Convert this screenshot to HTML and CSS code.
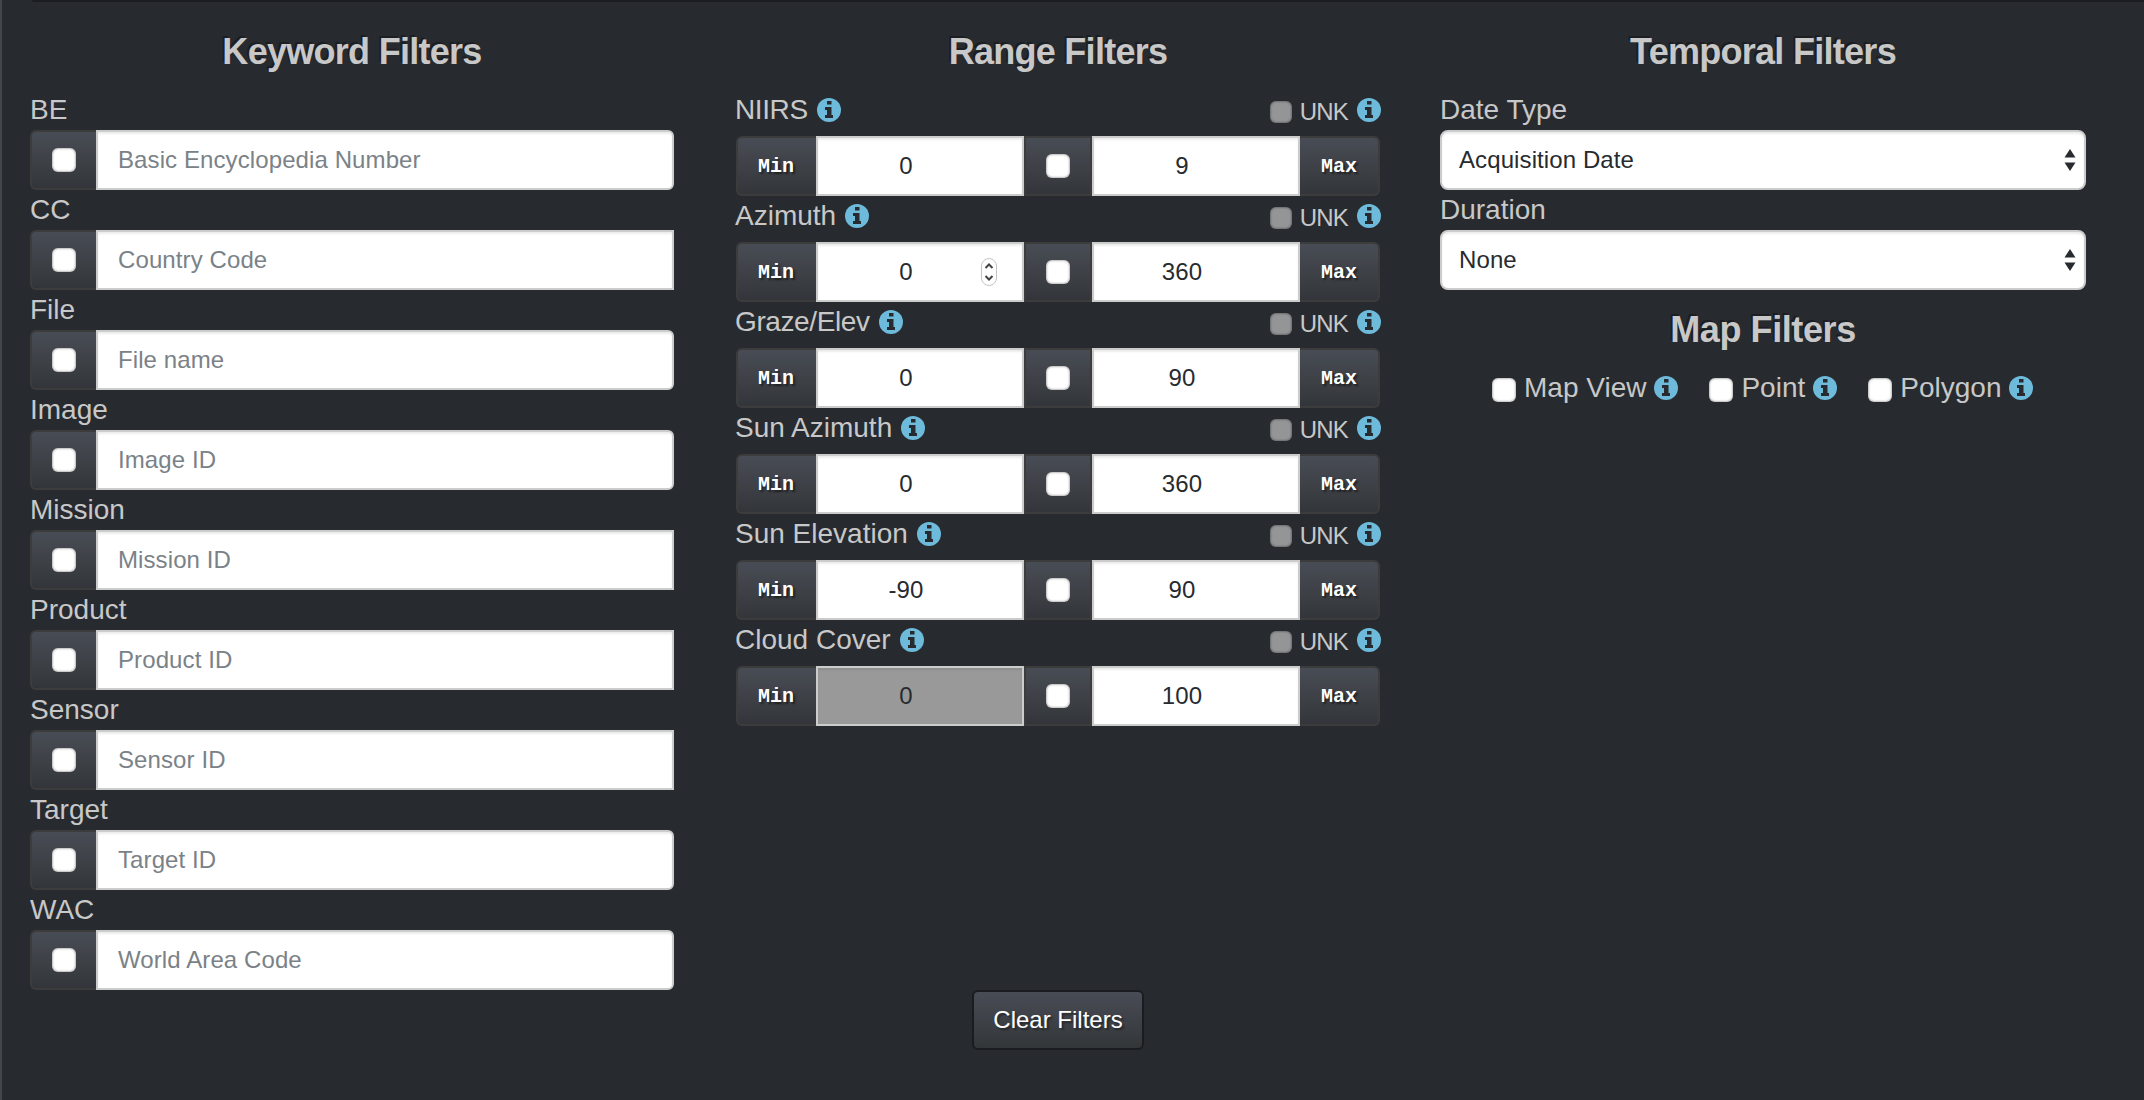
FILE: index.html
```html
<!DOCTYPE html>
<html lang="en">
<head>
<meta charset="utf-8">
<title>Filters</title>
<link rel="stylesheet" href="styles.css">
</head>
<body>
<svg class="defs" width="0" height="0">
  <symbol id="info" viewBox="0 0 24 24">
    <circle cx="12" cy="12" r="12"/>
    <path class="glyph" d="M10 3h4.5v3.6H10zM8 9h6.5v8H16v3H8v-3h2v-5H8z"/>
  </symbol>
  <symbol id="sort" viewBox="0 0 12 22">
    <path d="M6 0l5.5 8.5H.5zM6 22L.5 13.5h11z"/>
  </symbol>
</svg>
<main class="panel">
  <section class="column">
    <h4>Keyword Filters</h4>
    <label class="name">BE</label>
    <div class="group"><div class="addon"><input type="checkbox"></div><input class="field rounded" placeholder="Basic Encyclopedia Number"></div>
    <label class="name">CC</label>
    <div class="group"><div class="addon"><input type="checkbox"></div><input class="field" placeholder="Country Code"></div>
    <label class="name">File</label>
    <div class="group"><div class="addon"><input type="checkbox"></div><input class="field rounded" placeholder="File name"></div>
    <label class="name">Image</label>
    <div class="group"><div class="addon"><input type="checkbox"></div><input class="field rounded" placeholder="Image ID"></div>
    <label class="name">Mission</label>
    <div class="group"><div class="addon"><input type="checkbox"></div><input class="field" placeholder="Mission ID"></div>
    <label class="name">Product</label>
    <div class="group"><div class="addon"><input type="checkbox"></div><input class="field" placeholder="Product ID"></div>
    <label class="name">Sensor</label>
    <div class="group"><div class="addon"><input type="checkbox"></div><input class="field" placeholder="Sensor ID"></div>
    <label class="name">Target</label>
    <div class="group"><div class="addon"><input type="checkbox"></div><input class="field rounded" placeholder="Target ID"></div>
    <label class="name">WAC</label>
    <div class="group"><div class="addon"><input type="checkbox"></div><input class="field rounded" placeholder="World Area Code"></div>
  </section>
  <section class="column">
    <h4>Range Filters</h4>
    <div class="range-head">
      <label class="name tight">NIIRS<svg class="info"><use href="#info"/></svg></label>
      <label class="unknown"><input type="checkbox">UNK<svg class="info"><use href="#info"/></svg></label>
    </div>
    <div class="group">
      <div class="addon min">Min</div>
      <div class="number-box"><input class="field number" value="0"></div>
      <div class="addon middle"><input type="checkbox"></div>
      <div class="number-box"><input class="field number" value="9"></div>
      <div class="addon max">Max</div>
    </div>
    <div class="range-head">
      <label class="name">Azimuth<svg class="info"><use href="#info"/></svg></label>
      <label class="unknown"><input type="checkbox">UNK<svg class="info"><use href="#info"/></svg></label>
    </div>
    <div class="group">
      <div class="addon min">Min</div>
      <div class="number-box">
        <input class="field number" value="0">
        <svg class="spinner" viewBox="0 0 20 32">
          <rect x="2.5" y="2.5" width="15" height="27" rx="7.5" fill="#fff" stroke="#c4c4c4"/>
          <path d="M6.5 12l3.5-3.5 3.5 3.5M6.5 20l3.5 3.5 3.5-3.5" fill="none" stroke="#444" stroke-width="2"/>
        </svg>
      </div>
      <div class="addon middle"><input type="checkbox"></div>
      <div class="number-box"><input class="field number" value="360"></div>
      <div class="addon max">Max</div>
    </div>
    <div class="range-head">
      <label class="name tight">Graze/Elev<svg class="info"><use href="#info"/></svg></label>
      <label class="unknown"><input type="checkbox">UNK<svg class="info"><use href="#info"/></svg></label>
    </div>
    <div class="group">
      <div class="addon min">Min</div>
      <div class="number-box"><input class="field number" value="0"></div>
      <div class="addon middle"><input type="checkbox"></div>
      <div class="number-box"><input class="field number" value="90"></div>
      <div class="addon max">Max</div>
    </div>
    <div class="range-head">
      <label class="name">Sun Azimuth<svg class="info"><use href="#info"/></svg></label>
      <label class="unknown"><input type="checkbox">UNK<svg class="info"><use href="#info"/></svg></label>
    </div>
    <div class="group">
      <div class="addon min">Min</div>
      <div class="number-box"><input class="field number" value="0"></div>
      <div class="addon middle"><input type="checkbox"></div>
      <div class="number-box"><input class="field number" value="360"></div>
      <div class="addon max">Max</div>
    </div>
    <div class="range-head">
      <label class="name">Sun Elevation<svg class="info"><use href="#info"/></svg></label>
      <label class="unknown"><input type="checkbox">UNK<svg class="info"><use href="#info"/></svg></label>
    </div>
    <div class="group">
      <div class="addon min">Min</div>
      <div class="number-box"><input class="field number" value="-90"></div>
      <div class="addon middle"><input type="checkbox"></div>
      <div class="number-box"><input class="field number" value="90"></div>
      <div class="addon max">Max</div>
    </div>
    <div class="range-head">
      <label class="name">Cloud Cover<svg class="info"><use href="#info"/></svg></label>
      <label class="unknown"><input type="checkbox">UNK<svg class="info"><use href="#info"/></svg></label>
    </div>
    <div class="group">
      <div class="addon min">Min</div>
      <div class="number-box"><input class="field number" value="0" disabled></div>
      <div class="addon middle"><input type="checkbox"></div>
      <div class="number-box"><input class="field number" value="100"></div>
      <div class="addon max">Max</div>
    </div>
  </section>
  <section class="column">
    <h4>Temporal Filters</h4>
    <label class="name">Date Type</label>
    <div class="select"><span>Acquisition Date</span><svg><use href="#sort"/></svg></div>
    <label class="name">Duration</label>
    <div class="select"><span>None</span><svg><use href="#sort"/></svg></div>
    <h4 class="map-title">Map Filters</h4>
    <div class="map-options">
      <label class="option"><input type="checkbox"><span>Map View</span><svg class="info"><use href="#info"/></svg></label>
      <label class="option"><input type="checkbox"><span>Point</span><svg class="info"><use href="#info"/></svg></label>
      <label class="option"><input type="checkbox"><span>Polygon</span><svg class="info"><use href="#info"/></svg></label>
    </div>
  </section>
</main>
<footer><button class="clear" type="button">Clear Filters</button></footer>
</body>
</html>
```
FILE: styles.css
```css
* { box-sizing: border-box; }
body {
  margin: 0;
  height: 1100px;
  overflow: hidden;
  background: #272b30;
  color: #c8c8c8;
  font-family: "Liberation Sans", Arial, sans-serif;
  border-left: 2px solid #43474b;
}
body::before {
  content: "";
  display: block;
  height: 2px;
  margin-left: 30px;
  background: #1b1d20;
  border-bottom-left-radius: 2px;
}
.defs { display: block; position: absolute; }
.panel {
  display: grid;
  grid-template-columns: 644px 644px 646px;
  column-gap: 61px;
  padding: 28px 0 0 28px;
  height: 988px;
}
h4 {
  margin: 0 0 16px;
  height: 44px;
  line-height: 43px;
  font-size: 36px;
  font-weight: bold;
  letter-spacing: -.72px;
  text-align: center;
  text-shadow: -2px -2px 0 rgba(0, 0, 0, .3);
}
.name {
  display: block;
  height: 40px;
  line-height: 40px;
  font-size: 28px;
}
.group { display: flex; height: 60px; }
.addon {
  display: flex;
  align-items: center;
  justify-content: center;
  flex: none;
  width: 66px;
  border: 2px solid #3d3c3c;
  border-right-width: 0;
  border-radius: 6px 0 0 6px;
  background: linear-gradient(#484c55, #3c3f44 60%, #323539);
  color: #fff;
  font: bold 20px "Liberation Mono", "Courier New", monospace;
  text-shadow: 2px 2px 2px rgba(0, 0, 0, .5);
}
.addon.middle { width: 68px; border-right-width: 2px; border-radius: 0; }
.addon.min, .addon.max { width: 80px; padding-right: 2px; }
.addon.max { border-width: 2px 2px 2px 0; border-radius: 0 6px 6px 0; padding-right: 0; }
.field {
  flex: 1;
  min-width: 0;
  margin: 0;
  padding: 0 20px;
  border: 2px solid #ccc;
  border-radius: 0;
  background: #fff;
  box-shadow: inset 0 2px 2px rgba(0, 0, 0, .075);
  color: #272b30;
  font: 24px "Liberation Sans", Arial, sans-serif;
  letter-spacing: .1px;
}
.field.rounded { border-radius: 0 6px 6px 0; }
.field::placeholder { color: #7a8288; opacity: 1; }
.field.number { width: 100%; height: 60px; padding: 0 44px 0 16px; text-align: center; }
.field:disabled { background: #999; }
.number-box { position: relative; flex: 1; }
.spinner { position: absolute; left: 163px; top: 14px; width: 20px; height: 32px; }
input[type="checkbox"] {
  appearance: none;
  flex: none;
  width: 24px;
  height: 24px;
  margin: 0;
  border-radius: 6px;
  background: #fff;
  box-shadow: inset 0 0 2px 1px rgba(0, 0, 0, .28);
}
.info { flex: none; display: block; width: 24px; height: 24px; fill: #6dbadb; }
.glyph { fill: #272b30; }
.column:nth-child(2) { margin: 0 -1px 0 1px; }
.range-head { display: flex; justify-content: space-between; height: 46px; margin: 0 -1px; }
.range-head .name { display: flex; }
.range-head .name .info { margin: 8px 0 0 9px; }
.range-head .name.tight { letter-spacing: -.4px; }
.unknown { display: flex; font-size: 24px; line-height: 43px; letter-spacing: -.8px; }
.unknown input[type="checkbox"] {
  width: 22px;
  height: 22px;
  margin: 11px 8px 0 0;
  background: #949597;
}
.unknown .info { margin: 8px 0 0 9px; }
.select {
  display: flex;
  align-items: center;
  justify-content: space-between;
  height: 60px;
  padding: 0 8px 0 17px;
  border: 2px solid #ccc;
  border-radius: 8px;
  background: #fff;
  box-shadow: inset 0 2px 2px rgba(0, 0, 0, .075);
  color: #272b30;
  font-size: 24px;
  letter-spacing: .1px;
}
.select svg { width: 12px; height: 22px; fill: #272b30; }
.map-title { margin: 18px 0 0; letter-spacing: -.4px; }
.map-options { display: flex; gap: 31px; padding: 16px 0 0 52px; }
.option { display: flex; font-size: 28px; line-height: 40px; }
.option input[type="checkbox"] { margin: 10px 8px 0 0; }
.option .info { margin: 8px 0 0 8px; }
footer { display: flex; padding-left: 970px; }
.clear {
  width: 172px;
  height: 60px;
  padding: 0;
  border: 2px solid #1a1c1f;
  border-radius: 6px;
  background: linear-gradient(#484c55, #3c3f44 60%, #333639);
  color: #fff;
  font: 24px "Liberation Sans", Arial, sans-serif;
  text-shadow: 2px 2px 2px rgba(0, 0, 0, .4);
}
```
